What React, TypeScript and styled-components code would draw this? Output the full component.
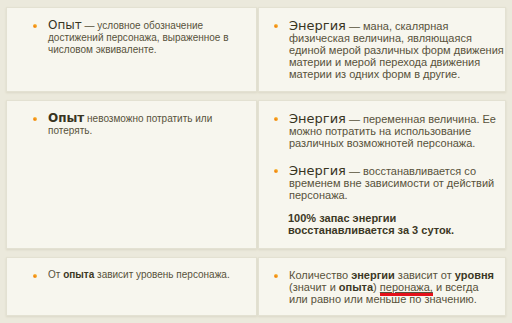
import React from "react";
import styled, { createGlobalStyle } from "styled-components";

const Global = createGlobalStyle`
  html, body { margin: 0; padding: 0; background: #ebe9dc; }
  body { font-family: "Liberation Sans", Arial, sans-serif; }
`;

const Page = styled.div`
  width: 512px;
  height: 323px;
  box-sizing: border-box;
  padding: 7px 6px 0 6px;
  display: flex;
  flex-direction: column;
  gap: 8px;
  overflow: hidden;
`;

const Row = styled.div<{ $h: number }>`
  display: grid;
  grid-template-columns: 251px 248px;
  gap: 1px;
  height: ${(p) => p.$h}px;
`;

const Cell = styled.div<{ $side: "left" | "right" }>`
  background: #f7f6ee;
  border: 1px solid #e3e1d2;
  box-shadow: 0 1px 2px rgba(170, 165, 135, 0.25);
  box-sizing: border-box;
  padding: ${(p) => (p.$side === "left" ? "11px 10px 0 25px" : "11px 12px 0 14px")};
  display: flex;
  flex-direction: column;
  gap: 15px;
`;

const Item = styled.div`
  display: flex;
  align-items: flex-start;
  gap: 11px;
`;

const Bullet = styled.span`
  flex: none;
  width: 4px;
  height: 4px;
  margin-top: 5px;
  margin-left: 1px;
  border-radius: 50%;
  background: radial-gradient(circle at 40% 65%, #f27a12 0%, #f5a623 50%, #f8d67a 100%);
`;

const Text = styled.p<{ $small?: boolean }>`
  margin: 0;
  font-size: ${(p) => (p.$small ? "10px" : "11px")};
  line-height: 12px;
  color: #57523b;
  white-space: nowrap;
`;

const Term = styled.span<{ $bold?: boolean; $small?: boolean }>`
  font-family: "DejaVu Sans", Tahoma, sans-serif;
  font-size: ${(p) => (p.$small ? "12px" : "13px")};
  line-height: 13px;
  color: #38341f;
  font-weight: ${(p) => (p.$bold ? 700 : 400)};
`;

const B = styled.b`
  font-weight: 700;
  color: #3c3825;
`;

const Strong = styled.p`
  margin: -4px 0 0 15px;
  font-size: 11px;
  line-height: 12px;
  font-weight: 700;
  color: #3c3825;
  white-space: nowrap;
`;

const Misspelt = styled.span`
  text-decoration: underline;
  text-decoration-thickness: 1px;
  border-bottom: 3px solid #e5101a;
`;

export default function App() {
  return (
    <>
      <Global />
      <Page>
        <Row $h={85}>
          <Cell $side="left">
            <Item>
              <Bullet />
              <Text $small>
                <Term $small>Опыт</Term> — условное обозначение
                <br />
                достижений персонажа, выраженное в
                <br />
                числовом эквиваленте.
              </Text>
            </Item>
          </Cell>
          <Cell $side="right">
            <Item>
              <Bullet />
              <Text>
                <Term>Энергия</Term> — мана, скалярная
                <br />
                физическая величина, являющаяся
                <br />
                единой мерой различных форм движения
                <br />
                материи и мерой перехода движения
                <br />
                материи из одних форм в другие.
              </Text>
            </Item>
          </Cell>
        </Row>
        <Row $h={149}>
          <Cell $side="left">
            <Item>
              <Bullet />
              <Text $small>
                <Term $small $bold>Опыт</Term> невозможно потратить или
                <br />
                потерять.
              </Text>
            </Item>
          </Cell>
          <Cell $side="right">
            <Item>
              <Bullet />
              <Text>
                <Term>Энергия</Term> — переменная величина. Ее
                <br />
                можно потратить на использование
                <br />
                различных возможнотей персонажа.
              </Text>
            </Item>
            <Item>
              <Bullet />
              <Text>
                <Term>Энергия</Term> — восстанавливается со
                <br />
                временем вне зависимости от действий
                <br />
                персонажа.
              </Text>
            </Item>
            <Strong>
              100% запас энергии
              <br />
              восстанавливается за 3 суток.
            </Strong>
          </Cell>
        </Row>
        <Row $h={59}>
          <Cell $side="left">
            <Item>
              <Bullet />
              <Text $small>
                От <B>опыта</B> зависит уровень персонажа.
              </Text>
            </Item>
          </Cell>
          <Cell $side="right">
            <Item>
              <Bullet />
              <Text>
                Количество <B>энергии</B> зависит от <B>уровня</B>
                <br />
                (значит и <B>опыта</B>) <Misspelt>перонажа,</Misspelt> и всегда
                <br />
                или равно или меньше по значению.
              </Text>
            </Item>
          </Cell>
        </Row>
      </Page>
    </>
  );
}
